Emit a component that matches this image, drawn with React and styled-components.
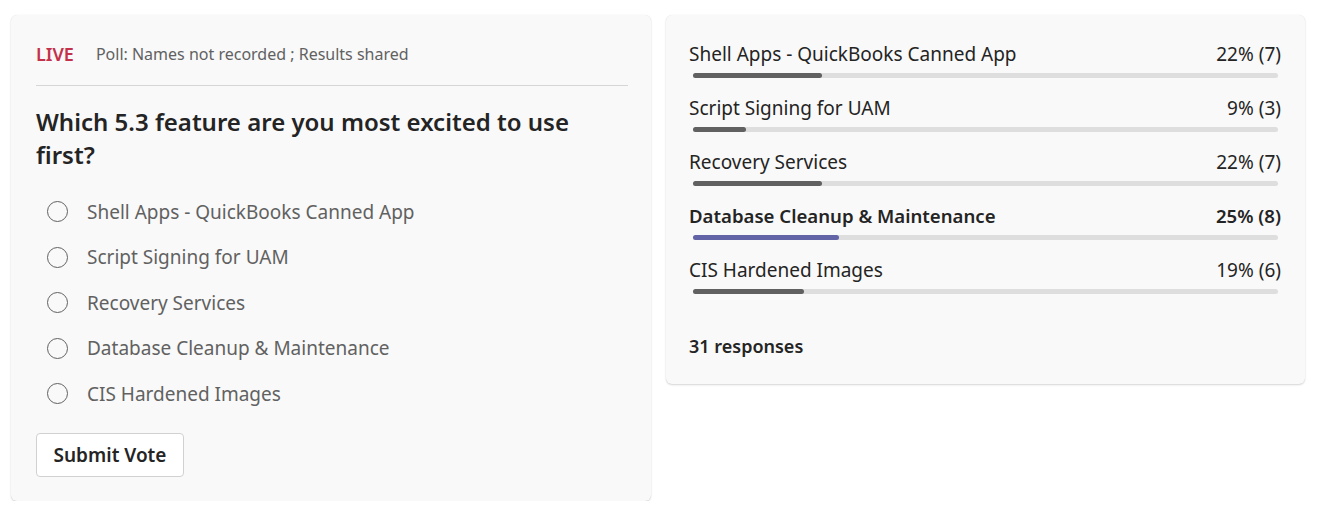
import styled, { createGlobalStyle } from "styled-components";

const GlobalStyle = createGlobalStyle`
  body {
    margin: 0;
    background: #ffffff;
    font-family: "Noto Sans", "Open Sans", sans-serif;
    color: #242424;
  }
`;

const options = [
  { name: "Shell Apps - QuickBooks Canned App", pct: 22, count: 7 },
  { name: "Script Signing for UAM", pct: 9, count: 3 },
  { name: "Recovery Services", pct: 22, count: 7 },
  { name: "Database Cleanup & Maintenance", pct: 25, count: 8, top: true },
  { name: "CIS Hardened Images", pct: 19, count: 6 },
];

const App = () => {
  return (
    <>
      <GlobalStyle />
      <Page>
        <Card>
          <Header>
            <Live>LIVE</Live>
            <Meta>Poll: Names not recorded ; Results shared</Meta>
          </Header>
          <Question>Which 5.3 feature are you most excited to use first?</Question>
          <Choices>
            {options.map((option) => (
              <Choice key={option.name}>
                <Radio />
                <ChoiceLabel>{option.name}</ChoiceLabel>
              </Choice>
            ))}
          </Choices>
          <SubmitButton>Submit Vote</SubmitButton>
        </Card>

        <ResultsCard>
          <Results>
            {options.map((option) => (
              <Result key={option.name}>
                <ResultHead $top={option.top}>
                  <span>{option.name}</span>
                  <span>
                    {option.pct}% ({option.count})
                  </span>
                </ResultHead>
                <Track>
                  <Fill $top={option.top} style={{ width: `${option.pct}%` }} />
                </Track>
              </Result>
            ))}
          </Results>
          <Responses>31 responses</Responses>
        </ResultsCard>
      </Page>
    </>
  );
};

const Page = styled.main`
  display: grid;
  grid-template-columns: 640px 639px;
  gap: 15px;
  align-items: start;
  padding: 15px 18px 0 11px;
`;

const Card = styled.section`
  background: #f9f9f9;
  border-radius: 6px;
  box-shadow: 0 1px 2px rgba(0, 0, 0, 0.16), 0 0 1px rgba(0, 0, 0, 0.1);
  padding: 26px 23px 24px 25px;
`;

const Header = styled.div`
  display: flex;
  align-items: center;
  gap: 22px;
  height: 26px;
  padding-bottom: 18px;
  border-bottom: 1px solid #d6d6d6;
`;

const Live = styled.span`
  color: #c4314b;
  font-size: 18px;
  font-weight: 600;
`;

const Meta = styled.span`
  color: #616161;
  font-size: 16px;
`;

const Question = styled.h2`
  margin: 19px 0 28px;
  font-size: 24px;
  line-height: 33px;
  font-weight: 600;
  color: #242424;
`;

const Choices = styled.div`
  display: flex;
  flex-direction: column;
  gap: 20.5px;
  padding-left: 11px;
`;

const Choice = styled.label`
  display: flex;
  align-items: center;
  gap: 19px;
  height: 25px;
`;

const Radio = styled.span`
  width: 21px;
  height: 21px;
  box-sizing: border-box;
  border: 1px solid #616161;
  border-radius: 50%;
  flex-shrink: 0;
`;

const ChoiceLabel = styled.span`
  font-size: 19px;
  color: #616161;
`;

const SubmitButton = styled.button`
  display: block;
  margin-top: 27px;
  width: 148px;
  height: 44px;
  background: #ffffff;
  border: 1px solid #d1d1d1;
  border-radius: 4px;
  font-family: inherit;
  font-size: 19px;
  font-weight: 600;
  color: #242424;
`;

const ResultsCard = styled(Card)`
  padding: 26px 24px 25px 23px;
`;

const Results = styled.div`
  display: flex;
  flex-direction: column;
  gap: 17px;
`;

const Result = styled.div`
  display: flex;
  flex-direction: column;
  gap: 6px;
`;

const ResultHead = styled.div`
  display: flex;
  justify-content: space-between;
  font-size: ${(p) => (p.$top ? "18.6px" : "19px")};
  line-height: 26px;
  color: #242424;
  font-weight: ${(p) => (p.$top ? 600 : 400)};
`;

const Track = styled.div`
  height: 5px;
  margin: 0 3px 0 4px;
  border-radius: 3px;
  background: #dedede;
`;

const Fill = styled.div`
  height: 100%;
  border-radius: 3px;
  background: ${(p) => (p.$top ? "#6264a7" : "#616161")};
`;

const Responses = styled.div`
  margin-top: 39px;
  font-size: 18px;
  font-weight: 600;
  line-height: 26px;
`;

export default App;
